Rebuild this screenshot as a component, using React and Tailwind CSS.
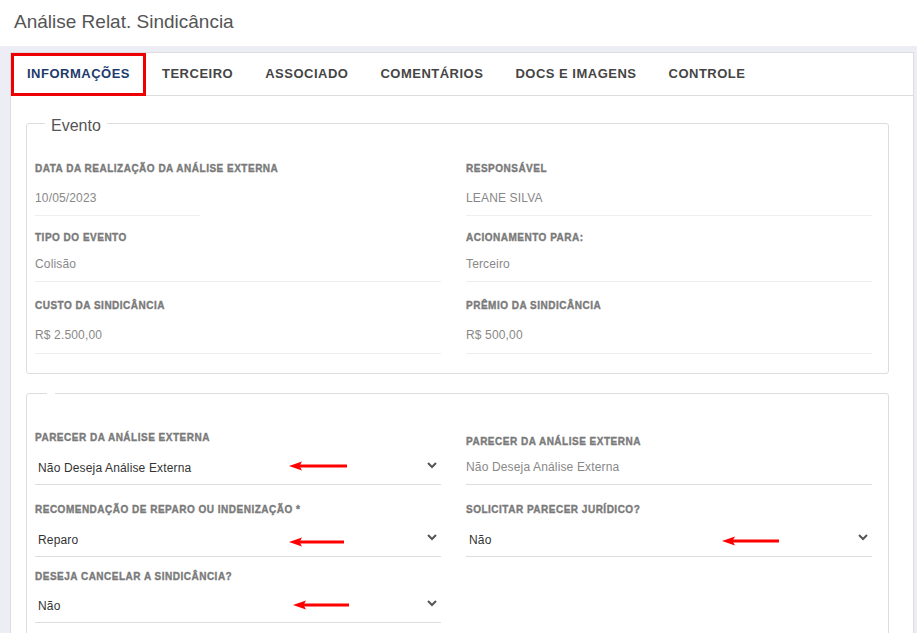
import React from "react";

const font = { fontFamily: '"Liberation Sans", Arial, sans-serif' };

function Chevron() {
  return (
    <svg width="10" height="7" viewBox="0 0 10 7" className="mb-[6px]">
      <polyline points="1,1 5,5 9,1" fill="none" stroke="#555" strokeWidth="2" />
    </svg>
  );
}

function Arrow({ w = 58 }) {
  return (
    <svg width={w} height="10" viewBox={`0 0 ${w} 10`}>
      <path d="M0 5 L13 0.5 L10.5 5 L13 9.5 Z" fill="#f00" />
      <rect x="9" y="3.5" width={w - 9} height="3" fill="#f00" />
    </svg>
  );
}

const labelCls =
  "text-[10px] font-bold leading-[12px] tracking-[0.5px] uppercase text-[#7a7a7a] [-webkit-text-stroke:0.35px_#7a7a7a]";

const valCls = "text-[12px] leading-[14px] tracking-[0.15px]";

export default function App() {
  const tabs = ["INFORMAÇÕES", "TERCEIRO", "ASSOCIADO", "COMENTÁRIOS", "DOCS E IMAGENS", "CONTROLE"];
  return (
    <div style={font} className="w-[917px] h-[633px] overflow-hidden bg-[#ededf5]">
      <div className="h-[46px] bg-white flex items-center pl-[14px] pb-[4px]">
        <h1 className="text-[19px] text-[#555] leading-none">Análise Relat. Sindicância</h1>
      </div>
      <div className="ml-[10px] mr-[3px] mt-[6px] bg-white border border-[#ddd] h-[700px]">
        <div className="flex border-b border-[#ddd] h-[43px]">
          {tabs.map((t, i) => (
            <div
              key={t}
              className={
                "h-[43px] flex items-center pb-[2px] px-[13px] border-[3px] text-[13px] font-bold tracking-[0.5px] " +
                (i === 0
                  ? "border-[#ee0000] text-[#1d3b6b]"
                  : "border-transparent text-[#454545]")
              }
            >
              {t}
            </div>
          ))}
        </div>

        <div className="pl-[15px] pr-[24px] pt-[13px]">
          <fieldset className="border border-[#ddd] rounded-[3px] pl-2 pr-4 pb-[19px]">
            <legend className="ml-[10px] px-[6px] pt-[6px] text-[16px] leading-[22px] text-[#555]">
              Evento
            </legend>
            <div className="grid grid-cols-2 gap-x-[25px] mt-[26px]">
              <div>
                <div className={labelCls}>Data da realização da análise externa</div>
                <div className={"w-[165px] pt-[16px] pb-[10px] text-[#888] border-b border-[#eee] " + valCls}>
                  10/05/2023
                </div>
              </div>
              <div>
                <div className={labelCls}>Responsável</div>
                <div className={"pt-[16px] pb-[10px] text-[#888] border-b border-[#eee] " + valCls}>
                  LEANE SILVA
                </div>
              </div>

              <div className="mt-[16px]">
                <div className={labelCls}>Tipo do evento</div>
                <div className={"pt-[13px] pb-[10px] text-[#888] border-b border-[#eee] " + valCls}>
                  Colisão
                </div>
              </div>
              <div className="mt-[16px]">
                <div className={labelCls}>Acionamento para:</div>
                <div className={"pt-[13px] pb-[10px] text-[#888] border-b border-[#eee] " + valCls}>
                  Terceiro
                </div>
              </div>

              <div className="mt-[18px]">
                <div className={labelCls}>Custo da sindicância</div>
                <div className={"pt-[16px] pb-[11px] text-[#888] border-b border-[#eee] " + valCls}>
                  R$ 2.500,00
                </div>
              </div>
              <div className="mt-[18px]">
                <div className={labelCls}>Prêmio da sindicância</div>
                <div className={"pt-[16px] pb-[11px] text-[#888] border-b border-[#eee] " + valCls}>
                  R$ 500,00
                </div>
              </div>
            </div>
          </fieldset>

          <fieldset className="mt-[18px] border border-[#ddd] rounded-[3px] pl-2 pr-4 pb-[20px]">
            <legend className="ml-[12px] w-[8px] h-[2px]"></legend>
            <div className="grid grid-cols-2 gap-x-[25px] mt-[38px]">
              <div>
                <div className={labelCls}>Parecer da análise externa</div>
                <div className={"relative flex items-center justify-between pl-[3px] pr-[4px] pt-[17px] pb-[9px] text-[#333] border-b border-[#ddd] " + valCls}>
                  <span>Não Deseja Análise Externa</span>
                  <Chevron />
                  <div className="absolute left-[254px] top-[17px] flex">
                    <Arrow w={58} />
                  </div>
                </div>
              </div>
              <div className="pt-[4px]">
                <div className={labelCls}>Parecer da análise externa</div>
                <div className={"pt-[12px] pb-[10px] text-[#888] border-b border-[#ddd] " + valCls}>
                  Não Deseja Análise Externa
                </div>
              </div>

              <div className="mt-[19px]">
                <div className={labelCls}>Recomendação de reparo ou indenização *</div>
                <div className={"relative flex items-center justify-between pl-[3px] pr-[4px] pt-[17px] pb-[9px] text-[#333] border-b border-[#ddd] " + valCls}>
                  <span>Reparo</span>
                  <Chevron />
                  <div className="absolute left-[254px] top-[21px] flex">
                    <Arrow w={55} />
                  </div>
                </div>
              </div>
              <div className="mt-[19px]">
                <div className={labelCls}>Solicitar parecer jurídico?</div>
                <div className={"relative flex items-center justify-between pl-[3px] pr-[4px] pt-[17px] pb-[9px] text-[#333] border-b border-[#ddd] " + valCls}>
                  <span>Não</span>
                  <Chevron />
                  <div className="absolute left-[256px] top-[20px] flex">
                    <Arrow w={57} />
                  </div>
                </div>
              </div>

              <div className="mt-[14px]">
                <div className={labelCls}>Deseja cancelar a sindicância?</div>
                <div className={"relative flex items-center justify-between pl-[3px] pr-[4px] pt-[16px] pb-[9px] text-[#333] border-b border-[#ddd] " + valCls}>
                  <span>Não</span>
                  <Chevron />
                  <div className="absolute left-[258px] top-[17px] flex">
                    <Arrow w={56} />
                  </div>
                </div>
              </div>
              <div></div>
            </div>
          </fieldset>
        </div>
      </div>
    </div>
  );
}
